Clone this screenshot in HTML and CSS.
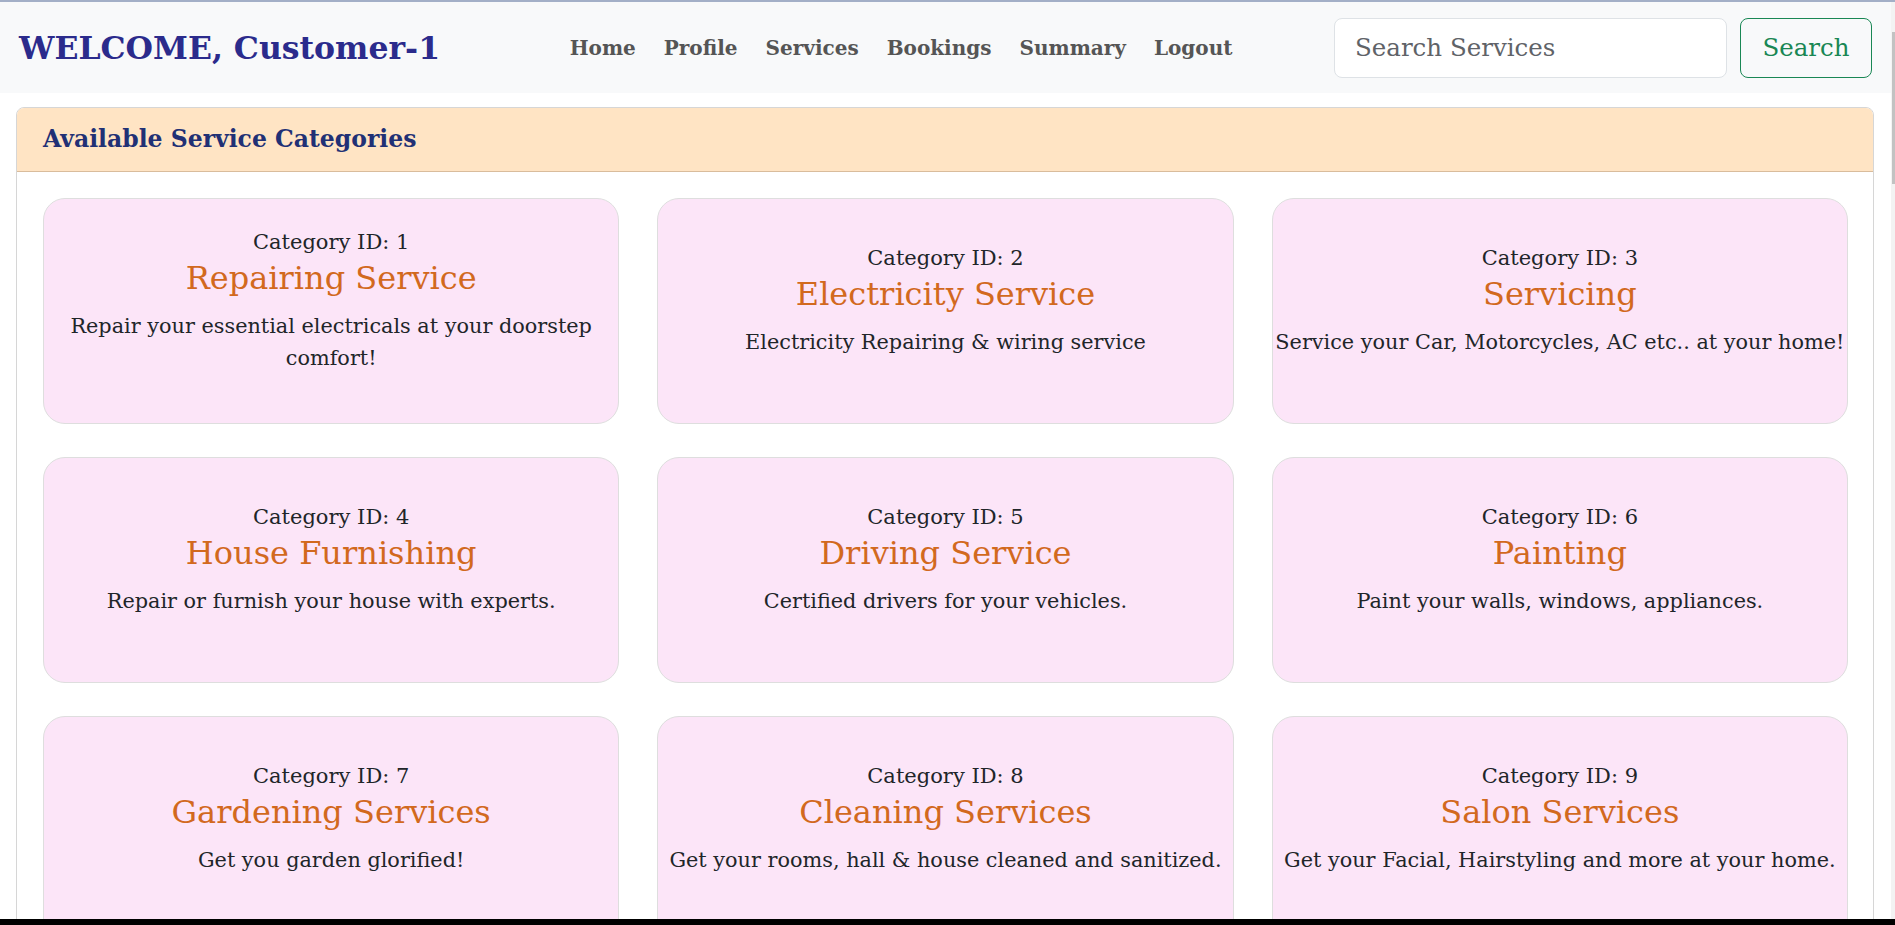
FILE: index.html
```html
<!DOCTYPE html>
<html lang="en">
<head>
<meta charset="utf-8">
<title>Customer Dashboard</title>
<link rel="stylesheet" href="styles.css">
</head>
<body>
<div class="screen">
  <div class="window">
    <div class="page">
      <header class="navbar">
        <div class="brand">WELCOME, Customer-1</div>
        <nav class="nav">
          <a href="#" class="nav-link">Home</a>
          <a href="#" class="nav-link">Profile</a>
          <a href="#" class="nav-link">Services</a>
          <a href="#" class="nav-link">Bookings</a>
          <a href="#" class="nav-link">Summary</a>
          <a href="#" class="nav-link">Logout</a>
        </nav>
        <form class="search">
          <input class="search-input" type="text" placeholder="Search Services">
          <button class="search-btn" type="button">Search</button>
        </form>
      </header>

      <section class="panel">
        <div class="panel-header">Available Service Categories</div>
        <div class="panel-body">
          <div class="grid">
            <div class="cat-card">
              <div class="cat-id">Category ID: 1</div>
              <h3 class="cat-name">Repairing Service</h3>
              <p class="cat-desc">Repair your essential electricals at your doorstep comfort!</p>
            </div>
            <div class="cat-card">
              <div class="cat-id">Category ID: 2</div>
              <h3 class="cat-name">Electricity Service</h3>
              <p class="cat-desc">Electricity Repairing &amp; wiring service</p>
            </div>
            <div class="cat-card">
              <div class="cat-id">Category ID: 3</div>
              <h3 class="cat-name">Servicing</h3>
              <p class="cat-desc">Service your Car, Motorcycles, AC etc.. at your home!</p>
            </div>
            <div class="cat-card">
              <div class="cat-id">Category ID: 4</div>
              <h3 class="cat-name">House Furnishing</h3>
              <p class="cat-desc">Repair or furnish your house with experts.</p>
            </div>
            <div class="cat-card">
              <div class="cat-id">Category ID: 5</div>
              <h3 class="cat-name">Driving Service</h3>
              <p class="cat-desc">Certified drivers for your vehicles.</p>
            </div>
            <div class="cat-card">
              <div class="cat-id">Category ID: 6</div>
              <h3 class="cat-name">Painting</h3>
              <p class="cat-desc">Paint your walls, windows, appliances.</p>
            </div>
            <div class="cat-card">
              <div class="cat-id">Category ID: 7</div>
              <h3 class="cat-name">Gardening Services</h3>
              <p class="cat-desc">Get you garden glorified!</p>
            </div>
            <div class="cat-card">
              <div class="cat-id">Category ID: 8</div>
              <h3 class="cat-name">Cleaning Services</h3>
              <p class="cat-desc">Get your rooms, hall &amp; house cleaned and sanitized.</p>
            </div>
            <div class="cat-card">
              <div class="cat-id">Category ID: 9</div>
              <h3 class="cat-name">Salon Services</h3>
              <p class="cat-desc">Get your Facial, Hairstyling and more at your home.</p>
            </div>
          </div>
        </div>
      </section>
    </div>
    <div class="scrollbar"><div class="thumb"></div></div>
  </div>
  <div class="taskbar"></div>
</div>
</body>
</html>
```

FILE: styles.css
```css
* { box-sizing: border-box; }

html, body {
  margin: 0;
  padding: 0;
  height: 925px;
  overflow: hidden;
  background: #ffffff;
}

body {
  font-family: "DejaVu Serif", "Liberation Serif", serif;
  font-size: 20px;
  line-height: 1.5;
  color: #212529;
}

.screen {
  height: 925px;
  display: flex;
  flex-direction: column;
  border-top: 2px solid #a3afc7;
}

.window {
  flex: 1;
  display: flex;
  min-height: 0;
  overflow: hidden;
}

.page {
  flex: 1;
  min-width: 0;
  overflow: hidden;
}

.scrollbar {
  width: 4px;
  background: #f3f3f3;
  padding-top: 30px;
}

.thumb {
  width: 3px;
  height: 152px;
  margin-left: 1px;
  background: #c2c2c2;
}

.taskbar {
  height: 6px;
  background: #000;
}

/* navbar */
.navbar {
  height: 91px;
  background: #f8f9fa;
  display: flex;
  align-items: center;
  padding: 0 19px 0 19px;
}

.brand {
  font-size: 31.5px;
  font-weight: bold;
  color: #2b2b8c;
  white-space: nowrap;
}

.nav {
  display: flex;
  gap: 2px;
  margin: 0 auto;
  padding-left: 28px;
}

.nav-link {
  font-size: 20px;
  font-weight: bold;
  color: #555555;
  text-decoration: none;
  padding: 8px 13px;
}

.search {
  display: flex;
  gap: 13px;
  margin: 0;
}

.search-input {
  width: 393px;
  height: 60px;
  border: 1px solid #dee2e6;
  border-radius: 8px;
  background: #fff;
  padding: 0 20px;
  font-family: inherit;
  font-size: 24.5px;
  color: #212529;
  outline: none;
}

.search-input::placeholder {
  color: #5f6368;
}

.search-btn {
  width: 132px;
  height: 60px;
  border: 1px solid #198754;
  border-radius: 8px;
  background: transparent;
  color: #198754;
  font-family: inherit;
  font-size: 24.5px;
  padding: 0;
}

/* panel */
.panel {
  margin: 14px 17px 0 16px;
  border: 1px solid #d6d6d6;
  border-radius: 8px;
  overflow: hidden;
}

.panel-header {
  height: 64px;
  background: #ffe4c4;
  border-bottom: 1px solid #d9bc9c;
  padding: 0 26px;
  display: flex;
  align-items: center;
  font-size: 23.5px;
  font-weight: bold;
  color: #213075;
}

.panel-body {
  padding: 26px 25px 26px 26px;
}

.grid {
  display: grid;
  grid-template-columns: repeat(3, 1fr);
  gap: 33px 38px;
}

.cat-card {
  height: 226px;
  background: #fce5f8;
  border: 1px solid #dedede;
  border-radius: 22px;
  display: flex;
  flex-direction: column;
  justify-content: center;
  align-items: center;
  text-align: center;
  padding: 0 0 22px 0;
}

.cat-id {
  font-size: 21px;
  line-height: 33px;
}

.cat-name {
  margin: 0 0 13px 0;
  font-size: 32px;
  font-weight: normal;
  line-height: 1.2;
  color: #d2691e;
}

.cat-desc {
  margin: 0;
  font-size: 20.8px;
  line-height: 32px;
}
```
